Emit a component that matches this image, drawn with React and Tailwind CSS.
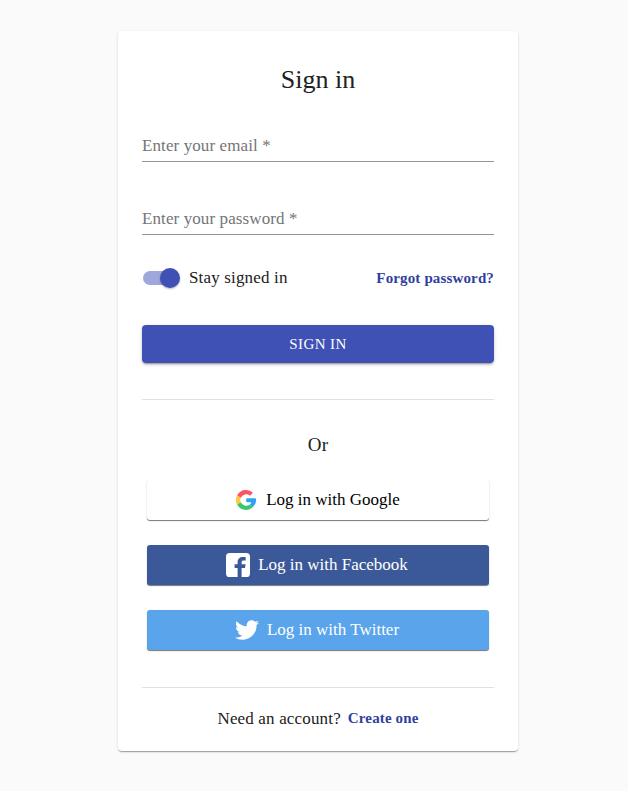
import { FaTwitter } from "react-icons/fa";

function GoogleIcon() {
  return (
    <svg width="20" height="20" viewBox="0 0 20 20" className="shrink-0">
      <path fill="#FFC844" d="M4.3 10c0-.8.15-1.6.4-2.3L1.2 5.2a10 10 0 0 0 0 9.6l3.5-2.5A6 6 0 0 1 4.300 10z" />
      <path fill="#FA5565" d="M1.200 5.200A10 10 0 0 1 16.900 2.800L14 5.700A6 6 0 0 0 4.700 7.700z" />
      <path fill="#3EC66A" d="M1.200 14.800A10 10 0 0 0 16.800 17.300L13.600 14.700A6 6 0 0 1 4.700 12.300z" />
      <path fill="#2FA3F2" d="M11.200 8.200H19A1 1 0 0 1 20 9.200A10 10 0 0 1 16.800 17.300L13.600 14.700A5 5 0 0 0 15.300 12.200H11.200A1 1 0 0 1 10.200 11.200V9.200A1 1 0 0 1 11.200 8.200z" />
    </svg>
  );
}

function FacebookIcon() {
  return (
    <svg width="24" height="24" viewBox="0 0 24 24" fill="white" className="shrink-0">
      <path d="M3.600 0H20.400A3.600 3.600 0 0 1 24 3.600V20.400A3.600 3.600 0 0 1 20.400 24H15.600V15H19L19.600 11.200H15.600V9.300C15.600 8 16.200 7.400 17.600 7.400H19.700V4.200C19.100 4 18.200 4 17 4C13.600 4 11.600 6 11.600 9.200V11.200H8.600V15H11.600V24H3.600A3.600 3.600 0 0 1 0 20.400V3.600A3.600 3.600 0 0 1 3.600 0Z" />
    </svg>
  );
}

function Field({ label, type }) {
  return (
    <label className="block h-8 border-b border-[#949494]">
      <input type={type} placeholder={label} className="block h-[31px] w-full bg-transparent text-[17px] tracking-[0.1px] text-[#212121] outline-none placeholder:text-[#757575]" />
    </label>
  );
}

const social =
  "mx-[5px] flex h-10 items-center justify-center rounded-[3px] text-[17px] leading-5 shadow-[0_1px_0_rgba(0,0,0,0.4),0_1px_2px_rgba(0,0,0,0.2)]";

export default function App() {
  return (
    <div className="flex min-h-[791px] justify-center bg-[#fafafa] pt-[31px] font-['Liberation_Serif','Times_New_Roman',serif] text-[#212121]">
      <main className="ml-2 flex h-[720px] w-[400px] flex-col rounded bg-white px-6 shadow-[0px_2px_1px_-1px_rgba(0,0,0,0.2),0px_1px_1px_0px_rgba(0,0,0,0.14),0px_1px_3px_0px_rgba(0,0,0,0.12)]">
        <h1 className="mt-8 h-[34px] text-center text-[26px] leading-[34px]">Sign in</h1>
        <form className="mt-[33px] flex flex-col">
          <Field label="Enter your email *" type="email" />
          <div className="mt-[41px]">
            <Field label="Enter your password *" type="password" />
          </div>
          <div className="mt-[31px] flex h-6 items-center justify-between">
            <div className="flex items-center">
              <span className="ml-px flex h-[14px] w-[37px] items-center justify-end rounded-full">
                <span className="mr-[-17px] h-[14px] w-[34px] rounded-full bg-[#9fa8da]" />
                <span className="z-10 size-5 shrink-0 rounded-full bg-[#3f51b5] shadow-[0px_1px_2px_rgba(0,0,0,0.3)]" />
              </span>
              <span className="ml-[9px] text-[17px] tracking-[0.16px]">Stay signed in</span>
            </div>
            <a className="text-[15px] font-bold tracking-[0.14px] text-[#303f9f]">Forgot password?</a>
          </div>
          <button type="button" className="mt-[35px] h-[38px] rounded bg-[#3f51b5] text-[15px] tracking-[0.43px] text-white shadow-[0px_3px_1px_-2px_rgba(0,0,0,0.2),0px_2px_2px_0px_rgba(0,0,0,0.14),0px_1px_5px_0px_rgba(0,0,0,0.12)]">
            SIGN IN
          </button>
        </form>
        <hr className="mt-9 border-[#e0e0e0]" />
        <h2 className="mt-[33px] text-center text-[19px] leading-6 tracking-[0.3px]">Or</h2>
        <div className="mt-[23px] flex flex-col gap-[25px]">
          <button type="button" className={`${social} bg-white text-black`}>
            <GoogleIcon />
            <span className="ml-[10px]">Log in with Google</span>
          </button>
          <button type="button" className={`${social} bg-[#3b5998] pr-[2px] text-white`}>
            <FacebookIcon />
            <span className="ml-2">Log in with Facebook</span>
          </button>
          <button type="button" className={`${social} bg-[#5aa4eb] pr-[2px] text-white`}>
            <FaTwitter size={24} className="shrink-0" />
            <span className="ml-2">Log in with Twitter</span>
          </button>
        </div>
        <hr className="mt-[37px] border-[#e0e0e0]" />
        <div className="mt-[18px] flex items-center justify-center leading-6">
          <span className="text-[17px] tracking-[0.16px]">Need an account?</span>
          <a className="mb-[2px] ml-[7px] text-[15px] font-bold tracking-[0.14px] text-[#303f9f]">Create one</a>
        </div>
      </main>
    </div>
  );
}
